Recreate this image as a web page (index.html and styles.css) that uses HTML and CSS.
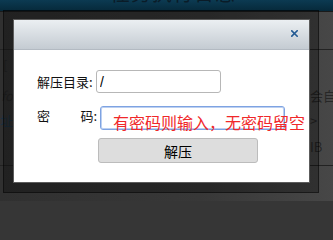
FILE: index.html
```html
<!DOCTYPE html>
<html lang="zh-CN">
<head>
<meta charset="utf-8">
<title>解压</title>
<link rel="stylesheet" href="styles.css">
</head>
<body>
<div class="page">
  <div class="topbar"><span class="title">任务执行日志</span></div>
  <div class="bg-gap"></div>
  <div class="bg-row r1"><span class="bl">[</span></div>
  <div class="bg-row r2"><span class="bl it">fo</span><span class="br">会自</span></div>
  <div class="bg-row r3"><span class="bl blue">址]</span><span class="br">&gt;</span></div>
  <div class="bg-row r4"><span class="bl"></span><span class="br">IB</span></div>
  <div class="bg-foot"></div>
</div>

<div class="frame">
  <div class="dialog">
    <div class="dialog-head">
      <span class="close" aria-label="关闭">
        <svg width="7" height="7" viewBox="0 0 7 7"><path d="M0.8 0.8 L6.2 6.2 M6.2 0.8 L0.8 6.2" stroke="#235a93" stroke-width="1.6" stroke-linecap="square" fill="none"/></svg>
      </span>
    </div>
    <div class="dialog-body">
      <div class="form-row row-dir">
        <label class="lbl lbl-dir">解压目录:</label>
        <input class="inp inp-dir" type="text" value="/">
      </div>
      <div class="form-row row-pwd">
        <label class="lbl lbl-pwd"><span>密</span><span>码:</span></label>
        <div class="field">
          <input class="inp inp-pwd" type="text" value="">
          <span class="hint">有密码则输入，无密码留空</span>
        </div>
      </div>
      <div class="form-row row-btn">
        <button class="btn" type="button">解压</button>
      </div>
    </div>
  </div>
</div>
</body>
</html>
```

FILE: styles.css
```css
html {
  margin: 0;
  padding: 0;
  width: 333px;
  height: 201px;
  overflow: hidden;
  background: #363636;
}
body {
  margin: 0;
  padding: 0;
  width: 333px;
  height: 201px;
  overflow: hidden;
  position: relative;
  font-family: "Noto Sans CJK SC", "Noto Sans", "Liberation Sans", sans-serif;
  background: linear-gradient(to right, #303030 0%, #383838 60%, #474747 100%);
}

/* dimmed page underneath */
.page {
  width: 333px;
  height: 201px;
  display: flex;
  flex-direction: column;
}
.topbar {
  height: 11px;
  background: linear-gradient(#0c3a52, #06293a);
  border-bottom: 1px solid #1a1a1a;
  overflow: hidden;
  flex: none;
}
.topbar .title {
  display: block;
  margin-top: -19px;
  padding-left: 110px;
  font-size: 20px;
  line-height: 24px;
  color: #0a1c28;
  letter-spacing: 1px;
}
.bg-gap {
  height: 37px;
  border-bottom: 1px solid #232323;
  flex: none;
}
.bg-row {
  display: flex;
  align-items: center;
  justify-content: space-between;
  font-size: 13px;
  color: #262626;
  flex: none;
  white-space: nowrap;
}
.r1 { height: 28px; }
.r2 { height: 34px; }
.r3 { height: 16px; }
.r4 { height: 37px; border-bottom: 1px solid #222; }
.bl { padding-left: 3px; }
.it { font-style: italic; padding-left: 1px; }
.blue { color: #1d3140; padding-left: 0; }
.br {
  width: 23px;
  overflow: hidden;
  color: #272727;
}
.bg-foot { flex: 1; }

/* modal */
.frame {
  position: absolute;
  left: 3px;
  top: 10px;
  width: 316px;
  height: 183px;
  box-sizing: border-box;
  padding: 9px 9px 10px 10px;
  background: rgba(0, 0, 0, 0.3);
  border: 1px solid rgba(0, 0, 0, 0.45);
}
.dialog {
  width: 297px;
  height: 164px;
  margin: -1px 0 0 -1px;
  box-sizing: border-box;
  border: 1px solid #5c5c5c;
  background: #fff;
  display: flex;
  flex-direction: column;
}
.dialog-head {
  height: 29px;
  flex: none;
  background: linear-gradient(#ebeff2, #c4cbd2);
  border-bottom: 1px solid #b3bac2;
  display: flex;
  justify-content: flex-end;
  align-items: center;
  padding-right: 11px;
}
.close {
  display: flex;
  width: 7px;
  height: 7px;
  margin-top: -2px;
}
.dialog-body {
  flex: 1;
  padding: 20px 0 0 23px;
  display: flex;
  flex-direction: column;
}
.form-row {
  display: flex;
  align-items: center;
}
.lbl {
  font-size: 13px;
  color: #111;
  line-height: 16px;
  flex: none;
}
.lbl-dir { width: 59px; }
.lbl-pwd {
  width: 60px;
  margin-right: 3px;
  display: flex;
  justify-content: space-between;
}
.row-dir { height: 23px; margin-bottom: 11px; }
.row-pwd { height: 24px; margin-bottom: 10px; }
.row-btn { height: 25px; padding-left: 61px; }

.inp {
  box-sizing: border-box;
  margin: 0;
  padding: 0 3px;
  font-family: "Liberation Sans", "Noto Sans CJK SC", sans-serif;
  font-size: 14px;
  color: #000;
  background: #fff;
  outline: none;
}
.inp-dir {
  width: 125px;
  height: 23px;
  border: 1px solid #b7b7b7;
  border-radius: 3px;
}
.field {
  position: relative;
  width: 185px;
  height: 24px;
}
.inp-pwd {
  width: 185px;
  height: 24px;
  border: 1px solid #7ea3e2;
  border-radius: 3px;
  box-shadow: inset 0 0 0 1px #bcd0f1;
}
.hint {
  position: absolute;
  left: 13px;
  top: 10px;
  font-size: 16px;
  line-height: 16px;
  color: #f0282a;
  white-space: nowrap;
}
.btn {
  width: 160px;
  height: 25px;
  margin: 0;
  padding: 0;
  box-sizing: border-box;
  border: 1px solid #bcbcbc;
  border-radius: 3px;
  background: #dddddd;
  font-family: "Noto Sans CJK SC", sans-serif;
  font-size: 14px;
  color: #000;
}
```
